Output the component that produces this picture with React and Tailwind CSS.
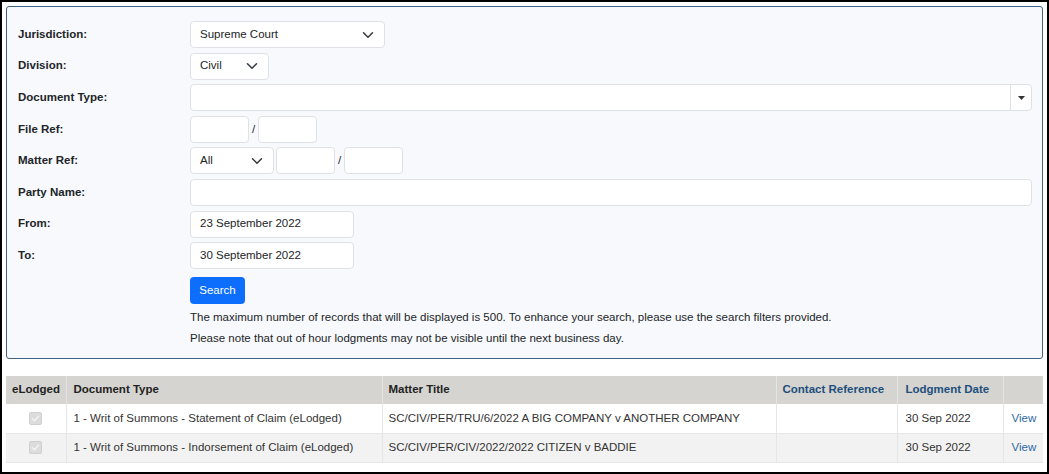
import React from "react";

const font = { fontFamily: '"Liberation Sans", Arial, sans-serif' };

function Chevron() {
  return (
    <svg width="12" height="12" viewBox="0 0 16 16" fill="none" stroke="#343a40" strokeWidth="2" strokeLinecap="round" strokeLinejoin="round">
      <path d="M2 5l6 6 6-6" />
    </svg>
  );
}

function Select({ value, w }) {
  return (
    <div className={`flex h-[27px] ${w} items-center justify-between rounded-[4px] border border-[#dee2e6] bg-white pl-[9px] pr-[10px] text-[11.5px] text-[#212529]`}>
      <span>{value}</span>
      <Chevron />
    </div>
  );
}

function Input({ w, value }) {
  return (
    <div className={`flex h-[27px] ${w} items-center rounded-[4px] border border-[#dee2e6] bg-white pl-[9px] text-[11.5px] text-[#212529]`}>
      {value}
    </div>
  );
}

function Row({ label, children }) {
  return (
    <div className="flex h-[27px] items-center">
      <div className="w-[172px] shrink-0 text-[11.5px] font-bold text-[#212529]">{label}</div>
      <div className="flex flex-1 items-center">{children}</div>
    </div>
  );
}

function Check() {
  return (
    <div className="mx-auto flex h-[13px] w-[13px] items-center justify-center rounded-[2px] border border-[#d0d0d0] bg-[#dcdcdc]">
      <svg width="9" height="9" viewBox="0 0 10 10" fill="none" stroke="#f4f4f4" strokeWidth="1.6" strokeLinecap="round" strokeLinejoin="round">
        <path d="M1.5 5.2l2.3 2.3 4.7-5" />
      </svg>
    </div>
  );
}

export default function App() {
  const rows = [
    ["1 - Writ of Summons - Statement of Claim (eLodged)", "SC/CIV/PER/TRU/6/2022 A BIG COMPANY v ANOTHER COMPANY", "30 Sep 2022"],
    ["1 - Writ of Summons - Indorsement of Claim (eLodged)", "SC/CIV/PER/CIV/2022/2022 CITIZEN v BADDIE", "30 Sep 2022"],
  ];
  return (
    <div style={font} className="h-[474px] w-[1049px] overflow-hidden border-2 border-black bg-white p-1">
      <div className="flex h-[353px] flex-col rounded-[3px] border border-[#3f6286] bg-[#f8f9fc] pl-[11px] pr-[10px] pt-[14px]">
        <div className="flex flex-col gap-[4.6px]">
          <Row label="Jurisdiction:"><Select value="Supreme Court" w="w-[195px]" /></Row>
          <Row label="Division:"><Select value="Civil" w="w-[79px]" /></Row>
          <Row label="Document Type:">
            <div className="flex h-[27px] flex-1 rounded-[4px] border border-[#dee2e6] bg-white">
              <div className="flex-1" />
              <div className="flex w-[21px] items-center justify-center border-l border-[#dee2e6]">
                <svg width="7" height="4" viewBox="0 0 7 4"><path d="M0 0h7L3.5 4z" fill="#333" /></svg>
              </div>
            </div>
          </Row>
          <Row label="File Ref:">
            <Input w="w-[59px]" />
            <span className="w-[9px] text-center text-[11.5px] text-[#212529]">/</span>
            <Input w="w-[59px]" />
          </Row>
          <Row label="Matter Ref:">
            <Select value="All" w="w-[84px]" />
            <div className="w-[2px]" />
            <Input w="w-[59px]" />
            <span className="w-[9px] text-center text-[11.5px] text-[#212529]">/</span>
            <Input w="w-[59px]" />
          </Row>
          <Row label="Party Name:"><div className="h-[27px] flex-1 rounded-[4px] border border-[#dee2e6] bg-white" /></Row>
          <Row label="From:"><Input w="w-[164px]" value="23 September 2022" /></Row>
          <Row label="To:"><Input w="w-[164px]" value="30 September 2022" /></Row>
        </div>
        <div className="ml-[172px] mt-[8px] flex flex-col">
          <div className="flex h-[27px] w-[55px] items-center justify-center rounded-[4px] bg-[#0d6efd] text-[11.5px] text-white">Search</div>
          <div className="mt-[6px] text-[11.5px] leading-[14px] text-[#212529]">The maximum number of records that will be displayed is 500. To enhance your search, please use the search filters provided.</div>
          <div className="mt-[7px] text-[11.5px] leading-[14px] text-[#212529]">Please note that out of hour lodgments may not be visible until the next business day.</div>
        </div>
      </div>
      <table className="mt-[17px] w-[1037px] table-fixed border-collapse text-[11.5px]">
        <colgroup>
          <col className="w-[60px]" />
          <col className="w-[316px]" />
          <col className="w-[394px]" />
          <col className="w-[121px]" />
          <col className="w-[106px]" />
          <col />
        </colgroup>
        <thead>
          <tr className="h-[28px] bg-[#d5d4d0] font-bold">
            <th className="border-r border-[#e4e4e2] px-[6px] text-center text-[#222]">eLodged</th>
            <th className="border-r border-[#e4e4e2] px-[7px] text-left text-[#222]">Document Type</th>
            <th className="border-r border-[#e4e4e2] px-[6px] text-left text-[#222]">Matter Title</th>
            <th className="border-r border-[#e4e4e2] px-[6px] text-left text-[#1d4f7c]">Contact Reference</th>
            <th className="border-r border-[#e4e4e2] px-[8px] text-left text-[#1d4f7c]">Lodgment Date</th>
            <th />
          </tr>
        </thead>
        <tbody className="text-[#333]">
          {rows.map((r, i) => (
            <tr key={i} className={`h-[29px] border-b border-[#e6e6e6] ${i % 2 ? "bg-[#f2f2f2]" : "bg-white"}`}>
              <td className="border-r border-[#e6e6e6]"><Check /></td>
              <td className="border-r border-[#e6e6e6] px-[7px]">{r[0]}</td>
              <td className="border-r border-[#e6e6e6] px-[6px]">{r[1]}</td>
              <td className="border-r border-[#e6e6e6] px-[6px]"></td>
              <td className="border-r border-[#e6e6e6] px-[8px]">{r[2]}</td>
              <td className="px-[8px] text-[#2f6aa3]">View</td>
            </tr>
          ))}
        </tbody>
      </table>
    </div>
  );
}
